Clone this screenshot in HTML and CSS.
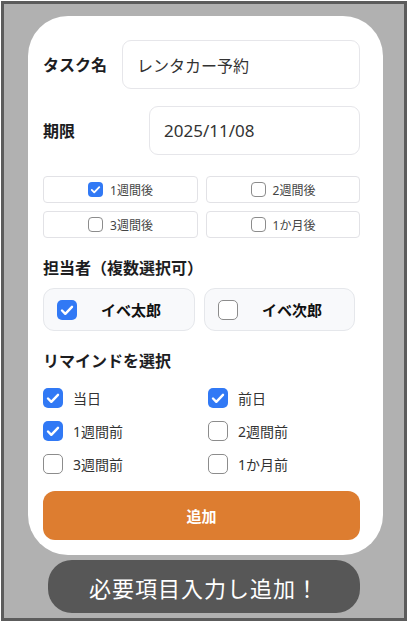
FILE: index.html
```html
<!DOCTYPE html>
<html lang="ja">
<head>
    <meta charset="UTF-8">
    <meta name="viewport" content="width=device-width, initial-scale=1.0">
    <title>タスク追加</title>
    <link rel="stylesheet" href="styles.css">
</head>
<body>
    <div class="frame">
        <div class="card">
            <div class="field">
                <div class="label name-label">タスク名</div>
                <div class="input">レンタカー予約</div>
            </div>
            <div class="field due">
                <div class="label due-label">期限</div>
                <div class="input date">2025/11/08</div>
            </div>

            <div class="quick">
                <div class="quick-btn"><span class="box small on"><svg viewBox="0 0 20 20"><path d="M5 10.5l3.3 3.3L15 6.8"/></svg></span>1週間後</div>
                <div class="quick-btn"><span class="box small"></span>2週間後</div>
                <div class="quick-btn"><span class="box small"></span>3週間後</div>
                <div class="quick-btn"><span class="box small"></span>1か月後</div>
            </div>

            <div class="label section">担当者（複数選択可）</div>
            <div class="people">
                <div class="person"><span class="box on"><svg viewBox="0 0 20 20"><path d="M5 10.5l3.3 3.3L15 6.8"/></svg></span><span class="person-name">イベ太郎</span></div>
                <div class="person"><span class="box"></span><span class="person-name">イベ次郎</span></div>
            </div>

            <div class="label section">リマインドを選択</div>
            <div class="remind">
                <div class="remind-item"><span class="box on"><svg viewBox="0 0 20 20"><path d="M5 10.5l3.3 3.3L15 6.8"/></svg></span>当日</div>
                <div class="remind-item"><span class="box on"><svg viewBox="0 0 20 20"><path d="M5 10.5l3.3 3.3L15 6.8"/></svg></span>前日</div>
                <div class="remind-item"><span class="box on"><svg viewBox="0 0 20 20"><path d="M5 10.5l3.3 3.3L15 6.8"/></svg></span>1週間前</div>
                <div class="remind-item"><span class="box"></span>2週間前</div>
                <div class="remind-item"><span class="box"></span>3週間前</div>
                <div class="remind-item"><span class="box"></span>1か月前</div>
            </div>

            <button class="add">追加</button>
        </div>
        <div class="toast">必要項目入力し追加！</div>
    </div>
</body>
</html>
```

FILE: styles.css
```css
body {
    margin: 0;
    background-color: #fff;
    font-family: 'Noto Sans', 'Noto Sans CJK JP', sans-serif;
    color: #1d1d1f;
}

.frame {
    margin: 1px 0 0 1px;
    width: 400px;
    height: 614px;
    border: 3px solid #5c5c5c;
    background-color: #b1b1b1;
}

.card {
    margin: 12px 0 0 24px;
    width: 355px;
    height: 539px;
    box-sizing: border-box;
    padding: 24px 23px 0 15px;
    background-color: #fff;
    border-radius: 40px;
}

.field {
    display: flex;
    align-items: center;
}

.field.due {
    margin-top: 17px;
}

.label {
    font-size: 16px;
    font-weight: 700;
    line-height: 20px;
    color: #1d1d1f;
}

.name-label {
    width: 79px;
    flex-shrink: 0;
}

.due-label {
    width: 106px;
    flex-shrink: 0;
}

.input {
    flex: 1;
    height: 49px;
    box-sizing: border-box;
    border: 1px solid #e6e6ea;
    border-radius: 9px;
    padding-left: 14px;
    display: flex;
    align-items: center;
    font-size: 16px;
    color: #333;
}

.input.date {
    font-size: 17px;
}

.quick {
    margin-top: 21px;
    display: grid;
    grid-template-columns: 155px 154px;
    gap: 8px;
}

.quick-btn {
    height: 27px;
    box-sizing: border-box;
    border: 1px solid #e2e2e6;
    border-radius: 4px;
    display: flex;
    align-items: center;
    justify-content: center;
    gap: 7px;
    font-size: 12px;
    color: #444;
}

.section {
    margin-top: 20px;
}

.box {
    width: 20px;
    height: 20px;
    box-sizing: border-box;
    border: 1.5px solid #8c8c8c;
    border-radius: 5px;
    background-color: #fff;
    display: inline-flex;
    align-items: center;
    justify-content: center;
    flex-shrink: 0;
}

.box.small {
    width: 15px;
    height: 15px;
    border-radius: 4px;
}

.box.on {
    border: 0;
    background-color: #3179f5;
}

.box svg {
    width: 100%;
    height: 100%;
    fill: none;
    stroke: #fff;
    stroke-width: 2.4;
    stroke-linecap: round;
    stroke-linejoin: round;
}

.people {
    margin-top: 10px;
    display: grid;
    grid-template-columns: 152px 151px;
    gap: 9px;
}

.person {
    height: 43px;
    box-sizing: border-box;
    border: 1px solid #e5e7eb;
    border-radius: 11px;
    background-color: #f8f9fb;
    display: flex;
    align-items: center;
    padding-left: 13px;
}

.person-name {
    margin-left: 24px;
    font-size: 15px;
    font-weight: 700;
    color: #111;
}

.remind {
    margin-top: 10px;
    display: grid;
    grid-template-columns: 165px 1fr;
}

.remind-item {
    height: 33px;
    display: flex;
    align-items: center;
    gap: 10px;
    font-size: 14px;
    color: #333;
}

.add {
    margin-top: 11px;
    width: 100%;
    height: 49px;
    border: 0;
    border-radius: 12px;
    background-color: #dd7d30;
    color: #fff;
    font-family: inherit;
    font-size: 15px;
    font-weight: 700;
}

.toast {
    margin: 5px 0 0 44px;
    width: 312px;
    height: 53px;
    border-radius: 24px;
    background-color: #575757;
    color: #fff;
    display: flex;
    align-items: center;
    justify-content: center;
    font-size: 22px;
    font-weight: 400;
    letter-spacing: 1px;
}
```
